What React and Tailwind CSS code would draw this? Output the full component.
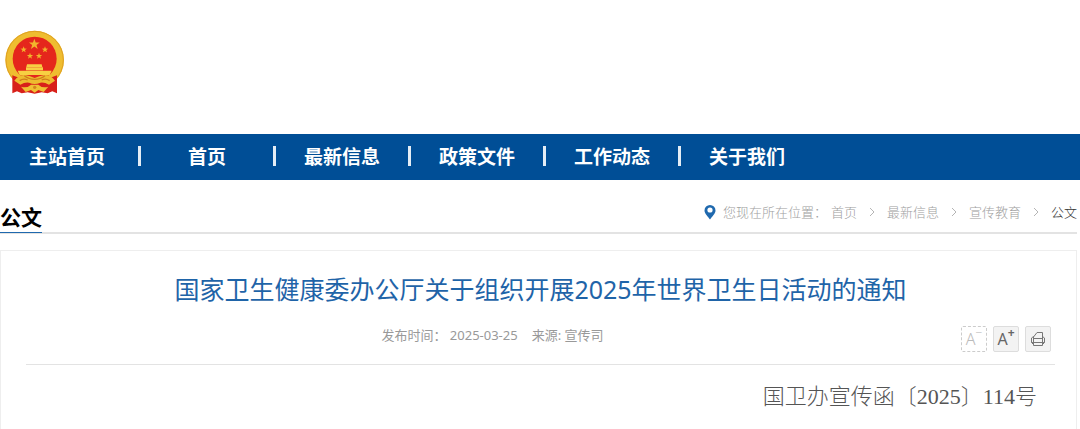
import React from 'react';

const navItems = ['首页', '最新信息', '政策文件', '工作动态', '关于我们'];
const crumbs = ['首页', '最新信息', '宣传教育'];

const STAR = 'M0 -10 L2.4 -3.2 L9.5 -3.1 L3.8 1.2 L5.9 8.1 L0 4 L-5.9 8.1 L-3.8 1.2 L-9.5 -3.1 L-2.4 -3.2 Z';

function Emblem() {
  return (
    <svg viewBox="16 16 180 192" className="w-[60px] h-16" role="img" aria-label="国徽">
      {/* 外环 */}
      <circle cx="105" cy="106" r="88" fill="#efbd30" />
      <circle cx="105" cy="106" r="86" fill="none" stroke="#dfa022" strokeWidth="3" />
      <circle cx="105" cy="102" r="66" fill="#e5261c" />
      {/* 五星 */}
      <g fill="#f2b42c">
        <path d={STAR} transform="translate(104 59) scale(1.7)" />
        <path d={STAR} transform="translate(72 75)" />
        <path d={STAR} transform="translate(136 75)" />
        <path d={STAR} transform="translate(91 94)" />
        <path d={STAR} transform="translate(118 94)" />
      </g>
      {/* 天安门 */}
      <path d="M82 119 H126 L128 127 H80 Z M79 128 H130 V137 H79 Z M54 138 H156 L150 151 H60 Z" fill="#f7d043" />
      {/* 绶带 */}
      <path
        d="M38 152 L60 160 L105 174 L150 160 L172 152 L172 206 L158 200 L144 206 L126 203 L105 207 L84 203 L66 206 L52 200 L38 206 Z"
        fill="#d8201a"
      />
      <path
        d="M44 168 Q56 150 76 151 Q92 154 105 160 Q118 154 134 151 Q154 150 166 168 L148 180 Q134 172 122 174 Q105 182 88 174 Q76 172 62 180 Z"
        fill="#edbb2f"
      />
      <path
        d="M74 153 Q88 164 105 164 Q122 164 136 153 M60 168 Q72 160 84 166 M126 166 Q138 160 150 168"
        fill="none"
        stroke="#cf7d1c"
        strokeWidth="4"
      />
      <path d="M64 186 Q82 192 94 180 H116 Q128 192 146 186 L132 202 L116 196 L105 204 L94 196 L78 202 Z" fill="#efc034" />
      <circle cx="105" cy="188" r="5" fill="#d4831d" />
    </svg>
  );
}

function PinIcon() {
  return (
    <svg viewBox="0 0 12 16" className="w-3 h-4 mr-[7px]" aria-hidden="true">
      <path
        d="M6 1 A5.5 5.5 0 0 1 11.5 6.5 C11.5 9.5 8 12.5 6 15.5 C4 12.5 0.5 9.5 0.5 6.5 A5.5 5.5 0 0 1 6 1 Z"
        fill="#1f69ae"
      />
      <circle cx="6" cy="6" r="2.6" fill="#fff" />
    </svg>
  );
}

function Chevron() {
  return (
    <svg viewBox="0 0 6 10" className="w-[6px] h-[10px] mx-3" aria-hidden="true">
      <path d="M1 1 L5 5 L1 9" fill="none" stroke="#b5b5b5" />
    </svg>
  );
}

function PrintIcon() {
  return (
    <svg viewBox="0 0 16 16" className="w-4 h-4" fill="none" stroke="#777" aria-hidden="true">
      <path d="M3.5 6 L7 1.5 H12.5 V6" />
      <path d="M3.5 5.5 L1.5 7 V11.5 L3.5 13.5 M12.5 5.5 L14.5 7 V11.5 L12.5 13.5" />
      <path d="M3.5 5.5 V14.5 H12.5 V5.5 M3.5 7.5 H12.5 M1.5 11.5 H14.5" />
    </svg>
  );
}

export default function App() {
  return (
    <div className="bg-white font-['Noto_Sans','Noto_Sans_CJK_SC',sans-serif]">
      <header className="h-[134px] pt-[30px] pl-[5px]">
        <Emblem />
      </header>

      {/* 导航 */}
      <nav className="pb-[2px] bg-[#004e96] text-white text-[19px] font-bold font-['Noto_Sans_CJK_SC',sans-serif]">
        <ul className="flex items-center h-11">
          <li className="w-[138px] pr-1 text-center">
            <a href="#">主站首页</a>
          </li>
          {navItems.map((item) => (
            <li key={item} className="flex items-center">
              <span className="w-[3px] h-5 bg-[#e4edf5]" />
              <a href="#" className="w-[132px] text-center">
                {item}
              </a>
            </li>
          ))}
        </ul>
      </nav>

      <main className="mr-[3px]">
        {/* 栏目标题和面包屑 */}
        <div className="flex items-start justify-between h-[54px] border-b-2 border-[#e3e3e3]">
          <h2 className="h-[53px] pt-[22px] leading-7 text-[21px] font-bold text-black border-b border-[#1f69ae] font-['Noto_Sans_CJK_SC',sans-serif]">
            公文
          </h2>
          <div className="flex items-center pt-[22px] leading-5 text-[13px] font-light text-[#a0a0a0] font-['Noto_Sans_CJK_SC',sans-serif]">
            <PinIcon />
            <span className="mr-1">您现在所在位置：</span>
            {crumbs.map((c) => (
              <React.Fragment key={c}>
                <a href="#">{c}</a>
                <Chevron />
              </React.Fragment>
            ))}
            <span className="text-[#333]">公文</span>
          </div>
        </div>

        {/* 正文 */}
        <article className="mt-4 pl-[25px] pr-[21px] border border-b-0 border-[#eee]">
          <h1 className="pt-[18px] leading-10 text-center text-[25px] text-[#1f64a8]">
            国家卫生健康委办公厅关于组织开展2025年世界卫生日活动的通知
          </h1>
          <div className="relative h-14 pt-[14px] pr-24 border-b border-[#e3e3e3]">
            <p className="flex justify-center gap-[14px] leading-6 text-[13px] text-[#999]">
              <span>发布时间： 2025-03-25</span>
              <span>来源: 宣传司</span>
            </p>
            <div className="absolute right-1 top-[17px] flex gap-[6px]">
              <button
                disabled
                aria-label="缩小字号"
                className="flex items-center justify-center w-[26px] h-[26px] border border-dashed border-[#ccc] rounded-xs text-[#bbb] text-base font-light"
              >
                A<sup className="text-xs">−</sup>
              </button>
              <button
                aria-label="放大字号"
                className="flex items-center justify-center w-[26px] h-[26px] border border-[#ddd] rounded-xs bg-[#f3f3f3] text-[#666] text-base"
              >
                A<sup className="text-xs font-bold">+</sup>
              </button>
              <button
                aria-label="打印"
                className="flex items-center justify-center w-[26px] h-[26px] border border-[#ddd] rounded-xs bg-[#f3f3f3]"
              >
                <PrintIcon />
              </button>
            </div>
          </div>
          <p className="py-4 pr-[18px] leading-8 text-right text-[22px] font-light text-[#555] font-['Liberation_Serif','Noto_Sans_CJK_SC',serif]">
            国卫办宣传函〔2025〕114号
          </p>
        </article>
      </main>
    </div>
  );
}
